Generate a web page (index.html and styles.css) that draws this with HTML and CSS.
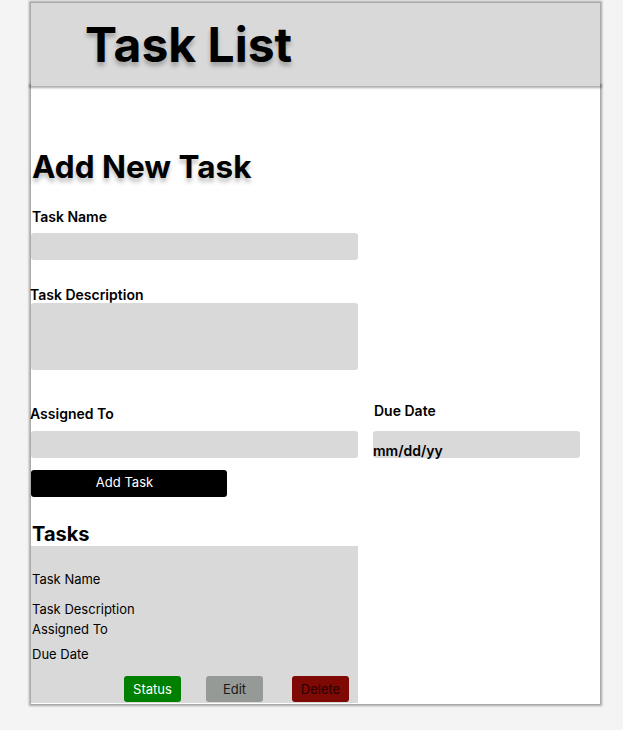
FILE: index.html
```html
<!DOCTYPE html>
<html>
<head>
<meta charset="utf-8">
<link rel="stylesheet" href="styles.css">
</head>
<body>
<div class="app">
  <header class="header">
    <h1 class="title">Task List</h1>
  </header>
  <main class="main">
    <h2 class="section-title">Add New Task</h2>
    <div class="field">
      <label class="label label-name">Task Name</label>
      <div class="input"></div>
    </div>
    <div class="field field-desc">
      <label class="label label-desc">Task Description</label>
      <div class="input input-tall"></div>
    </div>
    <div class="row">
      <div class="col col-left">
        <label class="label label-assigned">Assigned To</label>
        <div class="input"></div>
      </div>
      <div class="col col-right">
        <label class="label label-due">Due Date</label>
        <div class="input input-date"><span class="placeholder">mm/dd/yy</span></div>
      </div>
    </div>
    <button class="add-btn">Add Task</button>
    <h3 class="tasks-title">Tasks</h3>
    <div class="card">
      <div class="card-line line-name">Task Name</div>
      <div class="card-line line-desc">Task Description</div>
      <div class="card-line line-assigned">Assigned To</div>
      <div class="card-line line-due">Due Date</div>
      <div class="actions">
        <button class="act act-status">Status</button>
        <button class="act act-edit">Edit</button>
        <button class="act act-delete">Delete</button>
      </div>
    </div>
  </main>
</div>
</body>
</html>
```

FILE: styles.css
```css
html, body {
  margin: 0;
  padding: 0;
}
body {
  background: #f4f4f4;
  font-family: Inter, "Noto Sans", sans-serif;
  color: #000;
  height: 730px;
}
.app {
  width: 569px;
  margin-left: 31px;
  padding-top: 3px;
}
.header {
  height: 83px;
  background: #d9d9d9;
  box-shadow: 0 0 2px 2px rgba(0,0,0,0.32);
  display: flex;
  align-items: center;
  padding-left: 54px;
  position: relative;
  z-index: 1;
}
.title {
  margin: 0;
  font-size: 48px;
  font-weight: 700;
  line-height: 58px;
  text-shadow: 0 4px 4px rgba(0,0,0,0.25);
}
.main {
  background: #fff;
  height: 618px;
  box-shadow: 0 0 2px 2px rgba(0,0,0,0.32);
  display: flex;
  flex-direction: column;
  align-items: flex-start;
}
.section-title {
  margin: 61px 0 0 1px;
  font-size: 31.5px;
  font-weight: 700;
  line-height: 40px;
  text-shadow: 0 4px 4px rgba(0,0,0,0.25);
}
.field {
  display: flex;
  flex-direction: column;
  width: 327px;
}
.label {
  font-size: 14px;
  font-weight: 560;
  line-height: 17px;
  display: block;
}
.label-name {
  margin: 21px 0 8px 1px;
}
.input {
  height: 27px;
  background: #d9d9d9;
  border-radius: 3px;
  width: 327px;
}
.input-tall {
  height: 67px;
}
.label-desc {
  margin: 26px 0 0 -1px;
}
.row {
  display: flex;
  gap: 15px;
  margin-top: 32px;
}
.col {
  display: flex;
  flex-direction: column;
}
.col-left {
  width: 327px;
}
.col-right {
  width: 207px;
}
.label-assigned {
  margin: 3px 0 9px -1px;
}
.label-due {
  margin: 0 0 12px 1px;
}
.input-date {
  width: 207px;
  position: relative;
}
.placeholder {
  position: absolute;
  left: 0;
  top: 11px;
  font-size: 14px;
  font-weight: 560;
  line-height: 17px;
}
.add-btn {
  margin-top: 12px;
  width: 196px;
  height: 27px;
  background: #000;
  color: #fff;
  border: none;
  border-radius: 3px;
  font-family: Inter, "Noto Sans", sans-serif;
  font-size: 13px;
  font-weight: 400;
  padding: 0 9px 0 0;
  line-height: 24px;
  display: flex;
  align-items: flex-start;
  justify-content: center;
}
.tasks-title {
  margin: 26px 0 0 1px;
  font-size: 20px;
  font-weight: 700;
  line-height: 23px;
}
.card {
  width: 327px;
  height: 157px;
  background: #d9d9d9;
  box-sizing: border-box;
  padding-top: 25px;
  display: flex;
  flex-direction: column;
}
.card-line {
  font-size: 13px;
  line-height: 16px;
  padding-left: 1px;
}
.line-desc {
  margin-top: 14px;
}
.line-assigned {
  margin-top: 4px;
}
.line-due {
  margin-top: 9px;
}
.actions {
  display: flex;
  margin-top: 14px;
  padding-left: 93px;
}
.act {
  width: 57px;
  height: 26px;
  border: none;
  border-radius: 3px;
  font-family: Inter, "Noto Sans", sans-serif;
  font-size: 13px;
  font-weight: 400;
  padding: 0;
  line-height: 26px;
}
.act-status {
  background: #008000;
  color: #fff;
}
.act-edit {
  background: #969a97;
  color: #1a1a1a;
  margin-left: 25px;
}
.act-delete {
  background: #7f0904;
  color: #2a0000;
  margin-left: 29px;
}
```
